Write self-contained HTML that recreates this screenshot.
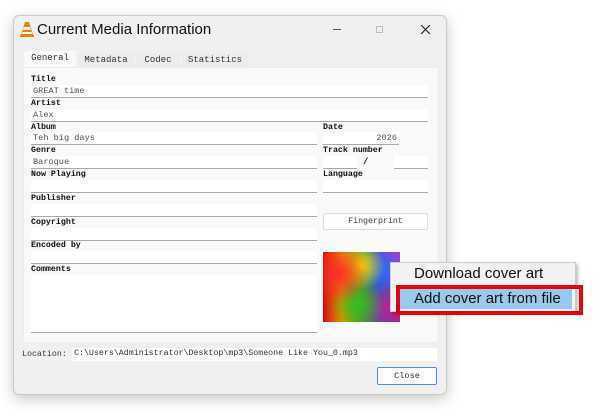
<!DOCTYPE html>
<html><head><meta charset="utf-8"><style>
*{margin:0;padding:0;box-sizing:border-box}
body{width:600px;height:415px;background:#fff;position:relative;overflow:hidden;font-family:"Liberation Mono",monospace}
.win{position:absolute;left:13px;top:15px;width:434px;height:380px;background:#f0f0f0;border:1px solid #c8c8c8;border-radius:6px;box-shadow:0 4px 14px rgba(0,0,0,.22)}
.a{position:absolute}
.title{left:37px;top:21px;font:15px "Liberation Sans",sans-serif;color:#111}
.panel{left:23px;top:67px;width:416px;height:276px;background:#f9f9f9;border:1px solid #ececec}
.tab{top:53px;height:15px;font-size:9px;color:#333;padding:2px 0 0 0;text-align:center;background:#ececec}
.lbl{font-size:8.3px;font-weight:bold;color:#111}
.f{background:#fff;border-bottom:1px solid #aaa;height:13px;font-size:8.6px;color:#555;padding:1px 2px}
.cov{left:323px;top:252px;width:77px;height:70px;background:
radial-gradient(circle at 20% 30%,#ff2a2a 0,transparent 40%),
radial-gradient(circle at 50% 20%,#ffe000 0,transparent 35%),
radial-gradient(circle at 80% 25%,#2a6bff 0,transparent 35%),
radial-gradient(circle at 95% 10%,#d030c0 0,transparent 30%),
radial-gradient(circle at 45% 75%,#33c020 0,transparent 40%),
radial-gradient(circle at 85% 80%,#c02090 0,transparent 40%),
linear-gradient(90deg,#d01010,#e89000,#40a020,#1060c0,#a02080)}
</style></head><body>
<div class="win"></div>
<svg class="a" style="left:20px;top:21px" width="14" height="16" viewBox="0 0 14 16"><path d="M5 1h4l4 13H1z" fill="#f08000"/><path d="M4 6h6l1 3H3z M2.5 11h9l.6 2H1.9z" fill="#fff"/><rect x="0" y="14" width="14" height="2" fill="#f08000"/></svg>
<div class="a title">Current Media Information</div>
<div class="a" style="left:333px;top:29px;width:8px;height:1px;background:#555"></div>
<div class="a" style="left:376px;top:26px;width:7px;height:7px;border:1px solid #bbb"></div>
<svg class="a" style="left:421px;top:25px" width="9" height="9" viewBox="0 0 9 9"><path d="M0 0L9 9M9 0L0 9" stroke="#222" stroke-width="1.1"/></svg>
<div class="a tab" style="left:24px;width:52px;background:#f9f9f9;top:51px;height:17px">General</div>
<div class="a tab" style="left:78px;width:56px">Metadata</div>
<div class="a tab" style="left:136px;width:44px">Codec</div>
<div class="a tab" style="left:182px;width:66px">Statistics</div>
<div class="a panel"></div>

<div class="a lbl" style="left:31px;top:75px">Title</div>
<div class="a f" style="left:31px;top:85px;width:397px">GREAT time</div>
<div class="a lbl" style="left:31px;top:99px">Artist</div>
<div class="a f" style="left:31px;top:109px;width:397px">Alex</div>
<div class="a lbl" style="left:31px;top:123px">Album</div>
<div class="a f" style="left:31px;top:132px;width:286px">Teh big days</div>
<div class="a lbl" style="left:323px;top:123px">Date</div>
<div class="a f" style="left:323px;top:132px;width:76px;text-align:right">2026</div>
<div class="a lbl" style="left:31px;top:146px">Genre</div>
<div class="a f" style="left:31px;top:156px;width:286px">Baroque</div>
<div class="a lbl" style="left:323px;top:146px">Track number</div>
<div class="a f" style="left:323px;top:156px;width:34px"></div>
<div class="a lbl" style="left:363px;top:157px;font-size:9px">/</div>
<div class="a f" style="left:394px;top:156px;width:34px"></div>
<div class="a lbl" style="left:31px;top:170px">Now Playing</div>
<div class="a f" style="left:31px;top:180px;width:286px"></div>
<div class="a lbl" style="left:323px;top:170px">Language</div>
<div class="a f" style="left:323px;top:180px;width:105px"></div>
<div class="a lbl" style="left:31px;top:194px">Publisher</div>
<div class="a f" style="left:31px;top:204px;width:286px"></div>
<div class="a" style="left:323px;top:213px;width:105px;height:17px;background:#fdfdfd;border:1px solid #ddd;border-radius:2px;font-size:8.3px;color:#444;text-align:center;line-height:15px">Fingerprint</div>
<div class="a lbl" style="left:31px;top:218px">Copyright</div>
<div class="a f" style="left:31px;top:228px;width:286px"></div>
<div class="a lbl" style="left:31px;top:241px">Encoded by</div>
<div class="a f" style="left:31px;top:251px;width:286px"></div>
<div class="a lbl" style="left:31px;top:265px">Comments</div>
<div class="a f" style="left:31px;top:275px;width:286px;height:58px"></div>
<div class="a cov"></div>

<div class="a" style="left:22px;top:350px;font-size:8.3px;color:#333">Location:</div>
<div class="a" style="left:72px;top:348px;width:365px;height:13px;background:#fff;font-size:8.3px;color:#333;padding:1px 2px">C:\Users\Administrator\Desktop\mp3\Someone Like You_0.mp3</div>
<div class="a" style="left:377px;top:367px;width:60px;height:18px;background:#fdfdfd;border:1px solid #4a90d9;border-radius:2px;font-size:8.6px;color:#333;text-align:center;line-height:16px">Close</div>

<div class="a" style="left:390px;top:262px;width:186px;height:50px;background:#f2f2f2;border:1px solid #ccc;box-shadow:2px 2px 3px rgba(0,0,0,.25)"></div>
<div class="a" style="left:414px;top:265px;font:15px 'Liberation Sans',sans-serif;color:#111">Download cover art</div>
<div class="a" style="left:396px;top:285px;width:187px;height:30px;border:4px solid #e8000a"></div>
<div class="a" style="left:400px;top:289px;width:172px;height:20px;background:#99c9ef"></div>
<div class="a" style="left:414px;top:290px;font:15px 'Liberation Sans',sans-serif;color:#111">Add cover art from file</div>
</body></html>
